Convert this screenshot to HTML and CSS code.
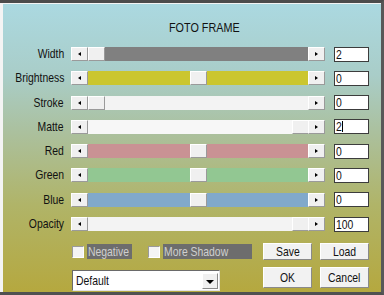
FILE: index.html
```html
<!DOCTYPE html>
<html lang="en">
<head>
  <meta charset="UTF-8" />
  <title>Foto Frame</title>
  <link rel="stylesheet" href="styles.css">
</head>
<body>
  <div class="window">
    <h1 class="title"><span class="txt">FOTO FRAME</span></h1>

    <div class="sliders">
      <div class="row">
        <label class="name"><span class="txt">Width</span></label>
        <div class="scroll track-gray">
          <span class="arrow left"></span>
          <span class="thumb" style="left: 17px"></span>
          <span class="arrow right"></span>
        </div>
        <div class="value"><span class="txt">2</span></div>
      </div>
      <div class="row">
        <label class="name"><span class="txt">Brightness</span></label>
        <div class="scroll track-yellow">
          <span class="arrow left"></span>
          <span class="thumb" style="left: 119px"></span>
          <span class="arrow right"></span>
        </div>
        <div class="value"><span class="txt">0</span></div>
      </div>
      <div class="row">
        <label class="name"><span class="txt">Stroke</span></label>
        <div class="scroll track-light">
          <span class="arrow left"></span>
          <span class="thumb" style="left: 17px"></span>
          <span class="arrow right"></span>
        </div>
        <div class="value"><span class="txt">0</span></div>
      </div>
      <div class="row">
        <label class="name"><span class="txt">Matte</span></label>
        <div class="scroll track-white">
          <span class="arrow left"></span>
          <span class="thumb" style="left: 221px"></span>
          <span class="arrow right"></span>
        </div>
        <div class="value"><span class="txt">2</span><span class="caret"></span></div>
      </div>
      <div class="row">
        <label class="name"><span class="txt">Red</span></label>
        <div class="scroll track-red">
          <span class="arrow left"></span>
          <span class="thumb" style="left: 119px"></span>
          <span class="arrow right"></span>
        </div>
        <div class="value"><span class="txt">0</span></div>
      </div>
      <div class="row">
        <label class="name"><span class="txt">Green</span></label>
        <div class="scroll track-green">
          <span class="arrow left"></span>
          <span class="thumb" style="left: 119px"></span>
          <span class="arrow right"></span>
        </div>
        <div class="value"><span class="txt">0</span></div>
      </div>
      <div class="row">
        <label class="name"><span class="txt">Blue</span></label>
        <div class="scroll track-blue">
          <span class="arrow left"></span>
          <span class="thumb" style="left: 119px"></span>
          <span class="arrow right"></span>
        </div>
        <div class="value"><span class="txt">0</span></div>
      </div>
      <div class="row">
        <label class="name"><span class="txt">Opacity</span></label>
        <div class="scroll track-light">
          <span class="arrow left"></span>
          <span class="thumb" style="left: 221px"></span>
          <span class="arrow right"></span>
        </div>
        <div class="value"><span class="txt">100</span></div>
      </div>
    </div>

    <div class="bottom">
      <div class="left-col">
        <div class="checks">
          <span class="check"><span class="box"></span><span class="check-label"><span class="txt">Negative</span></span></span>
          <span class="check"><span class="box"></span><span class="check-label wide"><span class="txt">More Shadow</span></span></span>
        </div>
        <div class="select">
          <span class="select-text"><span class="txt">Default</span></span>
          <span class="select-btn"></span>
        </div>
      </div>
      <div class="buttons">
        <button class="btn"><span class="txt">Save</span></button>
        <button class="btn"><span class="txt">Load</span></button>
        <button class="btn tall"><span class="txt">OK</span></button>
        <button class="btn tall"><span class="txt">Cancel</span></button>
      </div>
    </div>
  </div>
</body>
</html>
```

FILE: styles.css
```css
* {
  box-sizing: border-box;
}
body, html {
  margin: 0;
  padding: 0;
}
body {
  width: 384px;
  height: 295px;
  overflow: hidden;
  font-family: 'Liberation Sans', Arial, sans-serif;
  font-size: 13px;
  color: #111;
}
/* old dialog font is tall and narrow */
.txt {
  display: inline-block;
  white-space: nowrap;
  transform: scaleX(0.8);
  transform-origin: left center;
}
.window {
  width: 384px;
  height: 295px;
  border-top: 3px solid #4c4c4c;
  border-right: 3px solid #585858;
  border-bottom: 3px solid #505050;
  box-shadow: inset 3px 1px 0 #f4f4f4;
  background: linear-gradient(180deg, #abd9e1 0%, #a9cdc8 25%, #abc09d 45%, #b0b468 70%, #b5a83f 100%);
  padding-top: 17px;
}
.title {
  margin: 0 0 0 169px;
  font-size: 13.5px;
  font-weight: normal;
  line-height: 15px;
  height: 15px;
}
.sliders {
  display: flex;
  flex-direction: column;
  gap: 10.3px;
  margin-top: 12px;
}
.row {
  display: flex;
  align-items: center;
  height: 14px;
}
.name {
  width: 64px;
  text-align: right;
  margin-right: 7px;
  line-height: 14px;
}
.name .txt {
  transform-origin: right center;
}
.scroll {
  position: relative;
  width: 254px;
  height: 14px;
  display: flex;
  justify-content: space-between;
}
.track-gray { background: #808080; }
.track-yellow { background: #cbc62f; }
.track-light { background: #f3f3f3; }
.track-white { background: #f7f7f7; }
.track-red { background: #c99294; }
.track-green { background: #92c792; }
.track-blue { background: #81a9cb; }
.arrow, .thumb {
  width: 17px;
  height: 14px;
  background: #f0f0f0;
  border-top: 1px solid #fff;
  border-left: 1px solid #fff;
  border-right: 1px solid #9a9a9a;
  border-bottom: 1px solid #9a9a9a;
  position: relative;
}
.thumb {
  position: absolute;
  top: 0;
}
.arrow::after {
  content: '';
  position: absolute;
  top: 4px;
  left: 6px;
  border-top: 2.5px solid transparent;
  border-bottom: 2.5px solid transparent;
}
.arrow.left::after {
  border-right: 3px solid #000;
}
.arrow.right::after {
  border-left: 3px solid #000;
}
.value {
  margin-left: 9px;
  width: 35px;
  height: 15px;
  background: #fff;
  border: 1px solid #3c3c3c;
  line-height: 13px;
  padding-left: 1px;
  display: flex;
  align-items: center;
}
.caret {
  display: inline-block;
  width: 1px;
  height: 11px;
  background: #000;
  margin-left: -1px;
}
.bottom {
  display: flex;
  margin-top: 12px;
  padding-left: 72px;
}
.left-col {
  width: 191px;
}
.checks {
  display: flex;
  gap: 16px;
  height: 15px;
  margin-top: 1px;
}
.check {
  display: flex;
  align-items: center;
  gap: 3px;
}
.box {
  width: 12px;
  height: 12px;
  background: #f4f4f4;
  border-top: 1px solid #9a9a9a;
  border-left: 1px solid #9a9a9a;
  border-right: 1px solid #fff;
  border-bottom: 1px solid #fff;
}
.check-label {
  background: #6d6d6d;
  color: #cfcfcf;
  height: 15px;
  line-height: 15px;
  width: 45px;
  padding-left: 1px;
  white-space: nowrap;
}
.check-label.wide {
  width: 89px;
}
.select {
  margin-top: 11px;
  width: 148px;
  height: 21px;
  background: #fff;
  border-top: 1px solid #6a6a6a;
  border-left: 1px solid #6a6a6a;
  border-right: 1px solid #e0e0e0;
  border-bottom: 1px solid #e0e0e0;
  display: flex;
  align-items: center;
  justify-content: space-between;
  padding: 0 1px 0 3px;
}
.select-btn {
  width: 16px;
  height: 16px;
  background: #f0f0f0;
  border-top: 1px solid #fff;
  border-left: 1px solid #fff;
  border-right: 1px solid #8a8a8a;
  border-bottom: 1px solid #8a8a8a;
  position: relative;
}
.select-btn::after {
  content: '';
  position: absolute;
  top: 6px;
  left: 3px;
  border-left: 4px solid transparent;
  border-right: 4px solid transparent;
  border-top: 4px solid #000;
}
.buttons {
  display: grid;
  grid-template-columns: 49px 49px;
  grid-template-rows: 17px 21px;
  column-gap: 8px;
  row-gap: 7px;
}
.btn {
  font-family: inherit;
  font-size: 13px;
  color: #111;
  background: #f2f2f2;
  border-top: 1px solid #fff;
  border-left: 1px solid #fff;
  border-right: 1px solid #8a8a8a;
  border-bottom: 1px solid #8a8a8a;
  padding: 0;
  margin: 0;
  line-height: 1;
}
.btn .txt {
  transform-origin: center center;
}
```
